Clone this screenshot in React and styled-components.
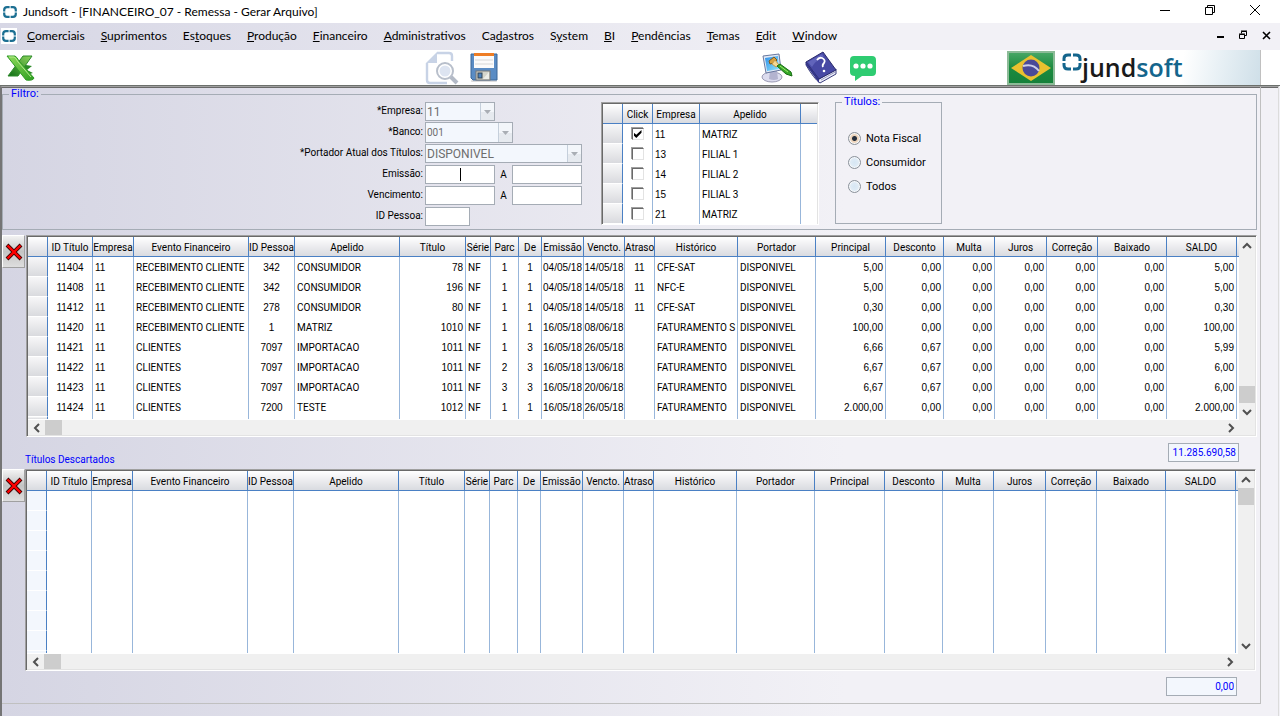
import React from "react";
import styled, { createGlobalStyle } from "styled-components";

const menuItems = [
  { before: "", key: "C", after: "omerciais" },
  { before: "", key: "S", after: "uprimentos" },
  { before: "Es", key: "t", after: "oques" },
  { before: "", key: "P", after: "rodução" },
  { before: "", key: "F", after: "inanceiro" },
  { before: "", key: "A", after: "dministrativos" },
  { before: "Ca", key: "d", after: "astros" },
  { before: "S", key: "y", after: "stem" },
  { before: "", key: "B", after: "I" },
  { before: "", key: "P", after: "endências" },
  { before: "", key: "T", after: "emas" },
  { before: "", key: "E", after: "dit" },
  { before: "", key: "W", after: "indow" },
];

const titleColumns = [
  { label: "ID Título", width: 45, align: "center", numeric: true },
  { label: "Empresa", width: 41, align: "left", numeric: true },
  { label: "Evento Financeiro", width: 115, align: "left" },
  { label: "ID Pessoa", width: 46, align: "center", numeric: true },
  { label: "Apelido", width: 105, align: "left" },
  { label: "Título", width: 66, align: "right", numeric: true },
  { label: "Série", width: 25, align: "left" },
  { label: "Parc", width: 28, align: "center", numeric: true },
  { label: "De", width: 23, align: "center", numeric: true },
  { label: "Emissão", width: 42, align: "date", numeric: true },
  { label: "Vencto.", width: 41, align: "date", numeric: true },
  { label: "Atraso", width: 30, align: "center", numeric: true },
  { label: "Histórico", width: 83, align: "left" },
  { label: "Portador", width: 78, align: "left" },
  { label: "Principal", width: 70, align: "right", numeric: true },
  { label: "Desconto", width: 58, align: "right", numeric: true },
  { label: "Multa", width: 51, align: "right", numeric: true },
  { label: "Juros", width: 52, align: "right", numeric: true },
  { label: "Correção", width: 51, align: "right", numeric: true },
  { label: "Baixado", width: 69, align: "right", numeric: true },
  { label: "SALDO", width: 70, align: "right", numeric: true },
];

const titleRows = [
  ["11404", "11", "RECEBIMENTO CLIENTE", "342", "CONSUMIDOR", "78", "NF", "1", "1", "04/05/18", "14/05/18", "11", "CFE-SAT", "DISPONIVEL", "5,00", "0,00", "0,00", "0,00", "0,00", "0,00", "5,00"],
  ["11408", "11", "RECEBIMENTO CLIENTE", "342", "CONSUMIDOR", "196", "NF", "1", "1", "04/05/18", "14/05/18", "11", "NFC-E", "DISPONIVEL", "5,00", "0,00", "0,00", "0,00", "0,00", "0,00", "5,00"],
  ["11412", "11", "RECEBIMENTO CLIENTE", "278", "CONSUMIDOR", "80", "NF", "1", "1", "04/05/18", "14/05/18", "11", "CFE-SAT", "DISPONIVEL", "0,30", "0,00", "0,00", "0,00", "0,00", "0,00", "0,30"],
  ["11420", "11", "RECEBIMENTO CLIENTE", "1", "MATRIZ", "1010", "NF", "1", "1", "16/05/18", "08/06/18", "", "FATURAMENTO S", "DISPONIVEL", "100,00", "0,00", "0,00", "0,00", "0,00", "0,00", "100,00"],
  ["11421", "11", "CLIENTES", "7097", "IMPORTACAO", "1011", "NF", "1", "3", "16/05/18", "26/05/18", "", "FATURAMENTO", "DISPONIVEL", "6,66", "0,67", "0,00", "0,00", "0,00", "0,00", "5,99"],
  ["11422", "11", "CLIENTES", "7097", "IMPORTACAO", "1011", "NF", "2", "3", "16/05/18", "13/06/18", "", "FATURAMENTO", "DISPONIVEL", "6,67", "0,67", "0,00", "0,00", "0,00", "0,00", "6,00"],
  ["11423", "11", "CLIENTES", "7097", "IMPORTACAO", "1011", "NF", "3", "3", "16/05/18", "20/06/18", "", "FATURAMENTO", "DISPONIVEL", "6,67", "0,67", "0,00", "0,00", "0,00", "0,00", "6,00"],
  ["11424", "11", "CLIENTES", "7200", "TESTE", "1012", "NF", "1", "1", "16/05/18", "26/05/18", "", "FATURAMENTO", "DISPONIVEL", "2.000,00", "0,00", "0,00", "0,00", "0,00", "0,00", "2.000,00"],
];

const companyColumns = [
  { label: "Click", width: 30, align: "center" },
  { label: "Empresa", width: 47, align: "left", numeric: true },
  { label: "Apelido", width: 101, align: "left" },
];

const companies = [
  { id: "11", name: "MATRIZ", checked: true },
  { id: "13", name: "FILIAL 1" },
  { id: "14", name: "FILIAL 2" },
  { id: "15", name: "FILIAL 3" },
  { id: "21", name: "MATRIZ" },
];

// eight blank lines for a grid without data
const blankRows = Array.from({ length: 8 }, () => titleColumns.map(() => ""));

/* ---------- icons ---------- */

const RingIcon = ({ size }) => (
  <svg width={size} height={size} viewBox="0 0 16 16" fill="none" stroke="#1c6f92" strokeWidth="2.2">
    <path d="M7.600 3.200H5Q2.200 3.200 2.200 6V7.600M8.600 3.200H11q2.800 0 2.800 2.800V7.600M2.200 8.600V10q0 2.800 2.800 2.800H7.600M13.800 8.600V10q0 2.800-2.800 2.800H8.600" />
  </svg>
);

const ExcelIcon = () => (
  <svg width="30" height="28" viewBox="0 0 30 28">
    <defs>
      <linearGradient id="xlA" x1="0" y1="0" x2="1" y2="1">
        <stop offset="0" stopColor="#8fdc5a" />
        <stop offset="1" stopColor="#2f9e22" />
      </linearGradient>
      <linearGradient id="xlB" x1="1" y1="0" x2="0" y2="1">
        <stop offset="0" stopColor="#8ed65c" />
        <stop offset="1" stopColor="#0d6d14" />
      </linearGradient>
    </defs>
    <path d="M15 10 27 12 22 16 28 19 18 22Z" fill="#2a8a25" />
    <path d="M18 2h9L13 22H3Z" fill="url(#xlB)" stroke="#2c8a2a" />
    <path d="M2 2h8q2 1 4 5l15 17q-1 3-8 2Z" fill="url(#xlA)" stroke="#2f9a26" />
    <path d="M4 3h5q2 1 4 5l13 15" fill="none" stroke="#b4ea8c" />
  </svg>
);

const PreviewIcon = () => (
  <svg width="34" height="34" viewBox="0 0 34 34" fill="none">
    <path d="M12 2h12q3 0 3 3v5M2 12v17q0 3 3 3h17" stroke="#c8d3e6" strokeWidth="2.400" />
    <path d="M12 1v11H1Z" fill="#c8d3e6" />
    <path d="m25 25 7 7" stroke="#b3bac6" strokeWidth="4" />
    <circle cx="20" cy="20" r="8" fill="#fff" stroke="#b8bfcb" strokeWidth="2" />
    <circle cx="20" cy="20" r="5.500" fill="#dde4f1" />
  </svg>
);

const SaveIcon = () => (
  <svg width="28" height="30" viewBox="0 0 28 30">
    <rect x="1" y="27" width="26" height="2" rx="1" fill="#ddd" />
    <path d="M1 1h26v26H3l-2-2Z" fill="#5a8cc4" stroke="#3a6698" />
    <rect x="4" y="1" width="20" height="14" fill="#fbfbfb" />
    <rect x="4" y="0" width="20" height="3" fill="#ee7d24" />
    <path d="M5 7h18M5 11h18" stroke="#d7d7d7" />
    <rect x="6" y="18" width="14" height="9" fill="#d5d5cb" stroke="#777" />
    <rect x="8" y="20" width="4" height="5" fill="#4d82bd" stroke="#345" />
    <path d="m13 26 6-7v7Z" fill="#eeeee8" />
  </svg>
);

const ThemeIcon = () => (
  <svg width="32" height="32" viewBox="0 0 32 32">
    <defs>
      <linearGradient id="screen" x1="0" y1="0" x2="1" y2="1">
        <stop offset="0" stopColor="#2f8fe8" />
        <stop offset="1" stopColor="#8fe4fb" />
      </linearGradient>
    </defs>
    <ellipse cx="11" cy="25" rx="10" ry="5" fill="#dcdcee" stroke="#9a9ab4" />
    <path d="M9 19h7l1 8q-4 2-9 0Z" fill="#b3b3cf" />
    <path d="M2 4 18 2l2 16-15 3Z" fill="#e0e8f6" stroke="#68789f" />
    <path d="m4 6 13-2 1 13-12 2Z" fill="url(#screen)" />
    <path d="m8 9 5-4 3 3-3 3-4 1Z" fill="#d8a23f" stroke="#80591d" />
    <path d="m14 8 4 5-3 2-4-3Z" fill="#f5d893" stroke="#c79c4a" />
    <path d="m16 14 3-2 11 8 1 4-6-2Z" fill="#35a828" stroke="#176c14" />
    <path d="m19 14 8 6" stroke="#a2e66f" />
  </svg>
);

const HelpIcon = () => (
  <svg width="34" height="34" viewBox="0 0 34 34">
    <path d="M2 11 15 28 32 18 32 23 16 32Q10 28 2 14Z" fill="#eceef8" stroke="#3d3f7d" />
    <path d="M2 11 19 1 32 19 15 28Z" fill="#4749a4" stroke="#2a2b6b" />
    <path d="M2 11v3l13 18v-4Z" fill="#33358a" />
    <path d="m4 11 14-8 2 3Q11 10 8 16Z" fill="#6164bb" />
    <path d="m17 29 14-8" stroke="#9a9cc2" />
    <path d="M13 9q2-3 5-2 4 2 2 5-2 2-1 4" fill="none" stroke="#fff" strokeWidth="1.800" />
    <circle cx="20" cy="20" r="1.300" fill="#fff" />
  </svg>
);

const ChatIcon = () => (
  <svg width="28" height="28" viewBox="0 0 28 28">
    <path d="M5 2h18q4 0 4 4v12q0 4-4 4H13l-7 5v-5Q1 22 1 18V6q0-4 4-4Z" fill="#2ecc71" />
    <g fill="#fff">
      <circle cx="7" cy="12" r="2.600" />
      <circle cx="14" cy="12" r="2.600" />
      <circle cx="21" cy="12" r="2.600" />
    </g>
  </svg>
);

const FlagIcon = () => (
  <svg width="48" height="34" viewBox="0 0 48 34">
    <defs>
      <linearGradient id="flag" x1="0" y1="0" x2="0" y2="1">
        <stop offset="0" stopColor="#4aa867" />
        <stop offset="0.500" stopColor="#1b8a3f" />
        <stop offset="1" stopColor="#15803a" />
      </linearGradient>
    </defs>
    <rect x="1" y="1" width="46" height="32" fill="url(#flag)" stroke="#8cbb97" strokeWidth="2" />
    <path d="m4 17 20-13 20 13-20 13Z" fill="#e9c12f" />
    <circle cx="24" cy="17" r="8.500" fill="#4a4a98" />
    <path d="M16 15q10-3 16 5" fill="none" stroke="#cdd0ea" strokeWidth="2" />
  </svg>
);

const LogoRing = () => (
  <svg width="20" height="22" viewBox="0 0 20 22" fill="none" stroke="#14658c" strokeWidth="3">
    <path d="M9 5H6Q2 5 2 8.500V11M11 5h3q4 0 4 3.500V11M2 13v2q0 4 4 4H9M18 13v2q0 4-4 4H11" />
  </svg>
);

const CrossIcon = () => (
  <svg width="18" height="18" viewBox="0 0 18 18">
    <path d="M2 2l14 14M16 2 2 16" stroke="#3a0000" strokeWidth="4" />
    <path d="M2.500 2.500l13 13M15.500 2.500 2.500 15.500" stroke="#ff0000" strokeWidth="2.400" />
  </svg>
);

const arrowPaths = {
  left: "M7 1 3 5l4 4",
  right: "M3 1l4 4-4 4",
  up: "M1 7l4-4 4 4",
  down: "M1 3l4 4 4-4",
};

const Arrow = ({ to }) => (
  <svg width="10" height="10" viewBox="0 0 10 10" fill="none" stroke="#505050" strokeWidth="2">
    <path d={arrowPaths[to]} />
  </svg>
);

/* ---------- grid ---------- */

const HorizontalScroll = () => (
  <ScrollTrack $direction="row">
    <ScrollButton aria-label="Rolar para a esquerda"><Arrow to="left" /></ScrollButton>
    <Thumb />
    <Spacer />
    <ScrollButton aria-label="Rolar para a direita"><Arrow to="right" /></ScrollButton>
  </ScrollTrack>
);

const VerticalScroll = ({ atEnd }) => (
  <ScrollTrack $direction="column">
    <ScrollButton aria-label="Rolar para cima"><Arrow to="up" /></ScrollButton>
    {atEnd && <Spacer />}
    <Thumb />
    {!atEnd && <Spacer />}
    <ScrollButton aria-label="Rolar para baixo"><Arrow to="down" /></ScrollButton>
  </ScrollTrack>
);

const DataGrid = ({ columns, rows, empty }) => (
  <Table>
    <colgroup>
      <Col $width={20} />
      {columns.map((col) => (
        <Col key={col.label} $width={col.width} />
      ))}
      <col />
    </colgroup>
    <thead>
      <tr>
        <HeadCell />
        {columns.map((col) => (
          <HeadCell key={col.label} scope="col">{col.label}</HeadCell>
        ))}
        <HeadCell />
      </tr>
    </thead>
    <tbody>
      {rows.map((row, i) => (
        <tr key={i}>
          <RowMarker $empty={empty} />
          {row.map((value, j) => (
            <Cell key={j} $align={columns[j].align} $numeric={columns[j].numeric}>
              {value}
            </Cell>
          ))}
          <TailCell />
        </tr>
      ))}
      <FillerRow>
        <RowMarker $empty={empty} />
        {columns.map((col) => (
          <Cell key={col.label} />
        ))}
        <TailCell />
      </FillerRow>
    </tbody>
  </Table>
);

const TitlesGrid = ({ rows, empty, atEnd, inset }) => (
  <GridRow $inset={inset}>
    <RemoveButton type="button" aria-label="Remover"><CrossIcon /></RemoveButton>
    <Sunken>
      <GridArea>
        <GridBody>
          <DataGrid columns={titleColumns} rows={rows} empty={empty} />
        </GridBody>
        <VerticalScroll atEnd={atEnd} />
        <HorizontalScroll />
        <Corner />
      </GridArea>
    </Sunken>
  </GridRow>
);

const Combo = ({ id, value, width, tall }) => (
  <ComboBox $width={width} $tall={tall}>
    <select id={id} disabled defaultValue={value}>
      <option>{value}</option>
    </select>
    <ComboArrow>
      <svg width="7" height="4" viewBox="0 0 7 4"><path d="M0 0h7L3.500 4Z" fill="#a9aeb4" /></svg>
    </ComboArrow>
  </ComboBox>
);

const App = () => {
  return (
    <Window>
      <GlobalStyle />
      <TitleBar>
        <RingIcon size={16} />
        <h1>Jundsoft - [FINANCEIRO_07 - Remessa - Gerar Arquivo]</h1>
        <WindowButtons $gap={25}>
          <button aria-label="Minimizar">
            <svg width="20" height="20" viewBox="0 0 20 20" stroke="#000"><path d="M5 8.500h10" /></svg>
          </button>
          <button aria-label="Restaurar">
            <svg width="20" height="20" viewBox="0 0 20 20" stroke="#000" fill="none">
              <path d="M5.500 5.500h7v7h-7zM7.500 5.500v-2h7v7h-2" />
            </svg>
          </button>
          <button aria-label="Fechar">
            <svg width="20" height="20" viewBox="0 0 20 20" stroke="#000"><path d="m5 3 10 10M15 3 5 13" /></svg>
          </button>
        </WindowButtons>
      </TitleBar>
      <MenuBar>
        <MenuLogo><RingIcon size={16} /></MenuLogo>
        {menuItems.map((item) => (
          <MenuItem href="#" key={item.key + item.after}>
            {item.before}
            <u>{item.key}</u>
            {item.after}
          </MenuItem>
        ))}
        <WindowButtons $gap={3}>
          <button aria-label="Minimizar janela">
            <svg width="20" height="20" viewBox="0 0 20 20" stroke="#000" strokeWidth="2"><path d="M7 11h7" /></svg>
          </button>
          <button aria-label="Restaurar janela">
            <svg width="20" height="20" viewBox="0 0 20 20" stroke="#000" fill="none">
              <path d="M6.500 8.500h5v4h-5zM6 8h6M8.500 7.500v-2h5v4h-2M8 5h6" />
            </svg>
          </button>
          <button aria-label="Fechar janela">
            <svg width="20" height="20" viewBox="0 0 20 20" stroke="#000" strokeWidth="1.600"><path d="m7 6 7 7M14 6l-7 7" /></svg>
          </button>
        </WindowButtons>
      </MenuBar>

      <Toolbar>
        <ToolGroup>
          <ToolButton aria-label="Exportar para Excel"><ExcelIcon /></ToolButton>
        </ToolGroup>
        <ToolGroup>
          <ToolButton aria-label="Visualizar"><PreviewIcon /></ToolButton>
          <ToolButton aria-label="Salvar"><SaveIcon /></ToolButton>
        </ToolGroup>
        <ToolGroup>
          <ToolButton aria-label="Temas"><ThemeIcon /></ToolButton>
          <ToolButton aria-label="Ajuda"><HelpIcon /></ToolButton>
          <ToolButton aria-label="Mensagens"><ChatIcon /></ToolButton>
        </ToolGroup>
        <Brand>
          <FlagIcon />
          <BrandBanner>
            <LogoRing />
            <BrandName>jund<b>soft</b></BrandName>
          </BrandBanner>
        </Brand>
      </Toolbar>

      <Workspace>
        <Frame>
          <Group>
            <legend>Filtro:</legend>
            <FilterBody>
              <FilterForm>
                <label htmlFor="empresa">*Empresa:</label>
                <Combo id="empresa" value="11" width={70} />
                <label htmlFor="banco">*Banco:</label>
                <Combo id="banco" value="001" width={88} tall />
                <label htmlFor="portador">*Portador Atual dos Títulos:</label>
                <Combo id="portador" value="DISPONIVEL" width={157} />
                <label htmlFor="emissao">Emissão:</label>
                <Range>
                  <CaretField>
                    <TextField id="emissao" $width={70} />
                  </CaretField>
                  <label htmlFor="emissaoFim">A</label>
                  <TextField id="emissaoFim" $width={70} />
                </Range>
                <label htmlFor="vencimento">Vencimento:</label>
                <Range>
                  <TextField id="vencimento" $width={70} />
                  <label htmlFor="vencimentoFim">A</label>
                  <TextField id="vencimentoFim" $width={70} />
                </Range>
                <label htmlFor="pessoa">ID Pessoa:</label>
                <TextField id="pessoa" $width={45} />
              </FilterForm>

              <CompanyPanel>
                <DataGrid
                  columns={companyColumns}
                  rows={companies.map((c) => [
                    <Tick type="checkbox" aria-label={c.name} defaultChecked={c.checked} />,
                    c.id,
                    c.name,
                  ])}
                />
              </CompanyPanel>

              <TitleKind>
                <legend>Títulos:</legend>
                {["Nota Fiscal", "Consumidor", "Todos"].map((kind, i) => (
                  <label key={kind}>
                    <Radio type="radio" name="titulos" defaultChecked={i === 0} />
                    {kind}
                  </label>
                ))}
              </TitleKind>
            </FilterBody>
          </Group>

          <TitlesGrid rows={titleRows} atEnd inset={3} />
          <Summary $inset={21}>
            <h2>Títulos Descartados</h2>
            <Total readOnly aria-label="Total" value="11.285.690,58" />
          </Summary>
          <TitlesGrid rows={blankRows} empty inset={4} />
          <Summary $inset={23}>
            <Total readOnly aria-label="Total descartado" value="0,00" />
          </Summary>
        </Frame>
      </Workspace>
    </Window>
  );
};

/* ---------- styles ---------- */

const GlobalStyle = createGlobalStyle`
  * {
    box-sizing: border-box;
  }

  body {
    margin: 0;
    background-color: #f2f1f6;
    color: #000;
    font-family: Roboto, sans-serif;
    font-size: 10px;
  }

  button {
    padding: 0;
    border: none;
    background: none;
  }

  svg {
    display: block;
    flex: none;
  }

  input, select {
    font: inherit;
    margin: 0;
  }
`;

const Window = styled.div`
  min-height: 100vh;
  display: flex;
  flex-direction: column;
`;

const TitleBar = styled.header`
  height: 23px;
  padding: 0 15px 0 2px;
  display: flex;
  align-items: center;
  gap: 5px;
  background-color: #fff;

  h1 {
    margin: 0;
    font: 12px Lato, sans-serif;
  }
`;

const WindowButtons = styled.div`
  margin-left: auto;
  display: flex;
  gap: ${({ $gap }) => $gap}px;
`;

const MenuBar = styled.nav`
  height: 27px;
  padding: 0 4px 2px 1px;
  display: flex;
  align-items: center;
  background: linear-gradient(to right, #d7d7e5, #f2f1f6 66%);
`;

const MenuLogo = styled.span`
  margin-right: 2px;
  background-color: #fff;
`;

const MenuItem = styled.a`
  padding: 0 8px;
  color: #000;
  text-decoration: none;
  font: 12px Lato, sans-serif;
`;

const Toolbar = styled.div`
  height: 36px;
  display: grid;
  grid-template-columns: 420fr 336fr 251fr 273px;
  grid-template-rows: 35px;
  background-color: #fff;
  border-bottom: 1px solid #6c706c;
`;

const ToolGroup = styled.div`
  padding-left: 5px;
  display: flex;
  align-items: center;
  gap: 11px;
`;

const ToolButton = styled.button`
  cursor: pointer;
`;

const Brand = styled.div`
  margin-right: 19px;
  display: flex;
  align-items: center;
  gap: 7px;
`;

const BrandBanner = styled.div`
  flex: 1;
  align-self: stretch;
  display: flex;
  background: linear-gradient(100deg, #fff 60%, #e6eff4 80%, #cfdfe8);
  border-right: 1px solid #c0c0c0;
`;

const BrandName = styled.span`
  color: #1a1a1a;
  font: 600 25px/35px "Open Sans", sans-serif;

  b {
    color: #14658c;
    font-weight: 600;
  }
`;

const Workspace = styled.main`
  flex: 1;
  margin-right: 1px;
  padding-right: 17px;
  background: linear-gradient(to right, #d5d5e3, #f2f1f6 66%);
  border: solid;
  border-width: 1px 1px 0 2px;
  border-color: #a0a0a0 #dcdcdc #fff #757575;
  box-shadow: inset 0 1px #696969;
`;

const Frame = styled.div`
  border: solid #c0c0c0;
  border-width: 0 1px 1px 0;
`;

const Group = styled.fieldset`
  min-width: 0;
  margin: 0 3px 0 0;
  padding: 0 0 3px;
  border: 1px solid #a5acb5;

  legend {
    margin-left: 6px;
    padding: 0 2px;
    color: #0000ff;
    font-size: 11px;
    line-height: 14px;
  }
`;

const FilterBody = styled.div`
  padding-top: 1px;
  display: flex;
  align-items: flex-start;
`;

const FilterForm = styled.div`
  margin-right: 19px;
  display: grid;
  grid-template-columns: 420px 157px;
  grid-auto-rows: 19px;
  gap: 2px;
  align-items: center;

  > label {
    padding-bottom: 2px;
    text-align: right;
  }
`;

const ComboBox = styled.div`
  width: ${({ $width }) => $width}px;
  height: ${({ $tall }) => ($tall ? 21 : 19)}px;
  align-self: center;
  display: flex;
  border: 1px solid #a5acb5;
  background-color: #f3f7fd;

  select {
    flex: 1;
    min-width: 0;
    padding: 0 1px;
    appearance: none;
    border: none;
    background: none;
    color: #6d6d6d;
    font-size: ${({ $tall }) => ($tall ? 10 : 12)}px;
    opacity: 1;
  }
`;

const ComboArrow = styled.span`
  width: 14px;
  display: flex;
  align-items: center;
  justify-content: center;
  border-left: 1px solid #c5cfdb;
  background: linear-gradient(#f3f6fa 50%, #e6eaef 50%);
`;

const TextField = styled.input`
  width: ${({ $width }) => $width}px;
  height: 19px;
  border: 1px solid #a5acb5;
  background-color: #fff;
  outline: none;
`;

const CaretField = styled.span`
  position: relative;
  display: flex;

  &::after {
    content: "";
    position: absolute;
    top: 3px;
    left: 50%;
    width: 1px;
    height: 13px;
    background-color: #000;
  }
`;

const Range = styled.div`
  display: flex;
  align-items: center;
  justify-content: space-between;
`;

const Sunken = styled.div`
  flex: 1;
  min-width: 0;
  padding: 1px;
  background-color: #fff;
  border: 1px solid;
  border-color: #a0a0a0 #fff #fff #a0a0a0;
  box-shadow: inset 1px 1px #696969, inset -1px -1px #e3e3e3;
`;

const CompanyPanel = styled(Sunken)`
  flex: none;
  width: 218px;
  height: 123px;
  margin-right: 16px;
  overflow: hidden;
`;

const TitleKind = styled(Group)`
  width: 107px;
  height: 129px;
  margin: -7px 0 0;
  padding: 17px 0 0 12px;

  legend {
    margin-left: -6px;
  }

  label {
    height: 24px;
    display: flex;
    align-items: center;
    gap: 5px;
    font-size: 11px;
  }
`;

const Radio = styled.input`
  appearance: none;
  width: 13px;
  height: 13px;
  border: 1px solid #8a919a;
  border-radius: 50%;
  background: radial-gradient(#d6e6f3, #e9f1f8);
  box-shadow: inset 0 0 0 1px #f6f8fa;

  &:checked {
    background: radial-gradient(#26303e 2px, #ecd2b8 3px, #f3e5d6);
  }
`;

const Tick = styled.input`
  appearance: none;
  width: 12px;
  height: 12px;
  display: block;
  margin: 0 auto;
  border: 1px solid;
  border-color: #696969 #e3e3e3 #e3e3e3 #696969;
  box-shadow: -1px -1px #a0a0a0;

  &:checked::after {
    content: "";
    display: block;
    width: 8px;
    height: 8px;
    margin: 1px;
    background-color: #000;
    clip-path: polygon(0 30%, 35% 60%, 100% 0, 100% 35%, 35% 100%, 0 65%);
  }
`;

const GridRow = styled.section`
  padding-top: ${({ $inset }) => ($inset === 3 ? 5 : 0)}px;
  padding-right: ${({ $inset }) => $inset}px;
  display: flex;
  align-items: flex-start;
  gap: ${({ $inset }) => 4 - $inset}px;
`;

const RemoveButton = styled.button`
  width: 23px;
  height: 33px;
  display: flex;
  align-items: center;
  justify-content: center;
  background: linear-gradient(#f3f3f3, #c4c4c4 50%, #dedede);
  border: 1px solid;
  border-color: #fff #a0a0a0 #a0a0a0 #fff;
`;

const GridArea = styled.div`
  display: grid;
  grid-template-columns: minmax(0, 1fr) 16px;
  grid-template-rows: 183px 15px;
`;

const GridBody = styled.div`
  overflow: hidden;
`;

const Table = styled.table`
  width: 100%;
  table-layout: fixed;
  border-spacing: 0;
  background-color: #fff;
`;

const Col = styled.col`
  width: ${({ $width }) => $width}px;
`;

const HeadCell = styled.th`
  height: 20px;
  padding: 1px 0 0;
  overflow: hidden;
  white-space: nowrap;
  font-weight: normal;
  background: linear-gradient(#fff, #ececef 50%, #d9dbe0);
  border-right: 1px solid #4a80c4;
  border-bottom: 1px solid #4a80c4;

  &:last-child {
    border-right: none;
  }
`;

const Cell = styled.td`
  height: 20px;
  padding: 0 ${({ $align }) => ($align === "date" ? 0 : 2)}px;
  overflow: hidden;
  white-space: nowrap;
  text-align: ${({ $align }) => ($align === "date" ? "center" : $align)};
  font-family: ${({ $numeric }) => ($numeric ? '"Liberation Sans"' : "Roboto")}, sans-serif;
  border-right: 1px solid #98b6da;
`;

const RowMarker = styled.td`
  padding: 0;
  background: ${({ $empty }) => ($empty ? "#f3f7fd" : "linear-gradient(#f7f7f8, #d9dade)")};
  border-right: 1px solid #4a80c4;
  border-bottom: 1px solid #fff;
`;

const TailCell = styled.td`
  padding: 0;
`;

const FillerRow = styled.tr`
  td {
    height: 2px;
    padding: 0;
    border-bottom: none;
  }
`;

const ScrollTrack = styled.div`
  display: flex;
  flex-direction: ${({ $direction }) => $direction};
  background-color: #f0f0f0;
`;

const ScrollButton = styled.button`
  min-width: 15px;
  min-height: 15px;
  flex: 0 0 17px;
  display: flex;
  align-items: center;
  justify-content: center;
`;

const Thumb = styled.div`
  flex: 0 0 17px;
  background-color: #cdcdcd;
`;

const Spacer = styled.div`
  flex: 1;
`;

const Corner = styled.div`
  background-color: #f0f0f0;
`;

const Summary = styled.div`
  height: 32px;
  padding: 6px ${({ $inset }) => $inset}px 0 23px;
  display: flex;

  h2 {
    margin: 10px 0 0;
    color: #0000ff;
    font-size: 10px;
    font-weight: normal;
    line-height: 14px;
  }
`;

const Total = styled.input`
  width: 71px;
  height: 19px;
  margin-left: auto;
  padding: 0 2px;
  border: 1px solid #a5acb5;
  background-color: #f3f7fd;
  color: #0000ff;
  text-align: right;
  outline: none;
`;

export default App;
